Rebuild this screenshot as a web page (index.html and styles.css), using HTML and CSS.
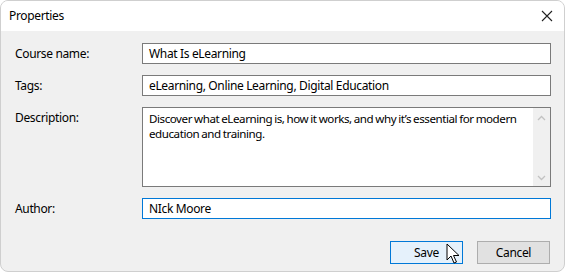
FILE: index.html
```html
<!DOCTYPE html>
<html>
<head>
<meta charset="utf-8">
<link rel="stylesheet" href="styles.css">
</head>
<body>
<div class="window">
  <div class="titlebar">
    <span class="title">Properties</span>
    <svg class="close" width="12" height="12" viewBox="0 0 12 12"><path d="M1 1L11 11M11 1L1 11" stroke="#222" stroke-width="1.1" fill="none"/></svg>
  </div>
  <div class="body">
    <div class="form">
      <label class="lbl">Course name:</label>
      <div class="input">What Is eLearning</div>
      <label class="lbl">Tags:</label>
      <div class="input">eLearning, Online Learning, Digital Education</div>
      <label class="lbl">Description:</label>
      <div class="textarea">
        <div class="ta-text">Discover what eLearning is, how it works, and why it’s essential for modern education and training.</div>
        <div class="scroll">
          <svg width="9" height="6" viewBox="0 0 9 6"><path d="M1 5L4.5 1.5L8 5" stroke="#c2c2c2" stroke-width="1.3" fill="none"/></svg>
          <svg width="9" height="6" viewBox="0 0 9 6"><path d="M1 1L4.5 4.5L8 1" stroke="#c2c2c2" stroke-width="1.3" fill="none"/></svg>
        </div>
      </div>
      <label class="lbl author">Author:</label>
      <div class="input focus">NIck Moore</div>
    </div>
    <div class="buttons">
      <div class="btn default">Save
        <svg class="cursor" width="14" height="22" viewBox="0 0 14 22"><path d="M1 1V17L5 13L8 20L10.5 19L7.5 12.5H13Z" fill="#fff" stroke="#000" stroke-width="1" stroke-linejoin="round"/></svg>
      </div>
      <div class="btn">Cancel</div>
    </div>
  </div>
</div>
</body>
</html>
```
FILE: styles.css
```css
html, body { margin: 0; padding: 0; background: #ffffff; }
body { font-family: "Noto Sans", "Open Sans", sans-serif; font-size: 12px; letter-spacing: -0.35px; color: #000; }
.window {
  width: 563px; height: 270px;
  border: 1px solid #cfcfcf;
  border-radius: 8px;
  overflow: hidden;
  display: flex; flex-direction: column;
  background: #f0f0f0;
}
.titlebar {
  height: 30px; background: #fff;
  display: flex; align-items: center; justify-content: space-between;
  padding: 0 11px 0 8px;
}
.title { font-size: 12px; line-height: 14px; color: #000; }
.close { display: block; }
.body { flex: 1; display: flex; flex-direction: column; padding: 12px 13px 0 14px; }
.form {
  display: grid;
  grid-template-columns: 127px 409px;
  row-gap: 11px;
}
.lbl { line-height: 21px; height: 21px; }
.input {
  height: 21px; box-sizing: border-box;
  border: 1px solid #7a7a7a; background: #fff;
  padding: 0 6px; line-height: 19px; white-space: nowrap;
}
.input.focus { border-color: #0078d7; }
.textarea {
  height: 80px; box-sizing: border-box;
  border: 1px solid #7a7a7a; background: #fff;
  display: flex;
}
.ta-text { flex: 1; padding: 3px 0 3px 6px; line-height: 15px; font-size: 11.6px; letter-spacing: -0.45px; word-spacing: -0.5px; }
.scroll {
  width: 17px; background: #f0f0f0;
  display: flex; flex-direction: column; align-items: center; justify-content: space-between;
  padding: 7px 0 5px;
}
.scroll svg { display: block; }
.buttons {
  display: flex; justify-content: flex-end; gap: 14px;
  margin-top: 22px; padding-right: 1px;
}
.btn {
  position: relative;
  width: 73px; height: 23px; box-sizing: border-box;
  border: 1px solid #adadad; background: #e1e1e1;
  display: flex; align-items: center; justify-content: center;
}
.btn.default { border: 1px solid #0078d7; background: #e5f1fb; }
.cursor { position: absolute; left: 55px; top: 1px; }
```
